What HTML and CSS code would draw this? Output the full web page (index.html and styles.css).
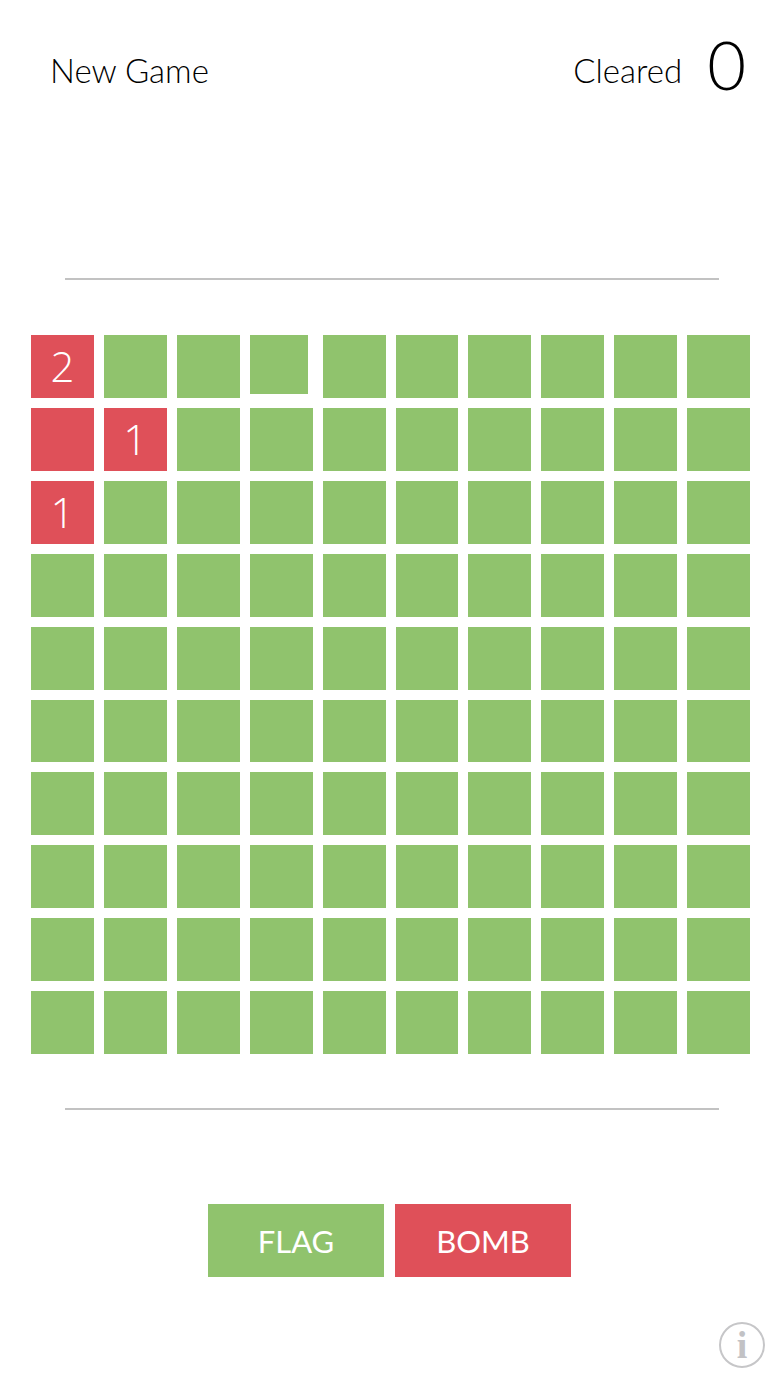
FILE: index.html
```html
<!DOCTYPE html>
<html lang="en">
<head>
<meta charset="utf-8">
<meta name="viewport" content="width=device-width, initial-scale=1">
<title>Minesweeper</title>
<link rel="stylesheet" href="styles.css">
</head>
<body>
<div class="game">
  <header class="top">
    <button class="new-game" type="button">New Game</button>
    <div class="score"><span class="score-label">Cleared</span><output class="score-value">0</output></div>
  </header>
  <hr class="rule">
  <main class="board" id="board"></main>
  <hr class="rule">
  <div class="modes">
    <button class="mode flag" type="button">FLAG</button>
    <button class="mode bomb" type="button">BOMB</button>
  </div>
  <footer class="bottom">
    <button class="info" type="button" aria-label="Information">i</button>
  </footer>
</div>
<script src="board.js"></script>
</body>
</html>
```
FILE: styles.css
```css
* {
  box-sizing: border-box;
}

body {
  margin: 0;
  background: #fff;
  color: #000;
  font-family: Lato, "Open Sans", sans-serif;
  font-weight: 300;
}

button {
  margin: 0;
  padding: 0;
  border: 0;
  border-radius: 0;
  background: none;
  color: inherit;
  font: inherit;
  cursor: pointer;
}

.game {
  display: flex;
  flex-direction: column;
}

.top {
  display: flex;
  justify-content: space-between;
  align-items: flex-start;
  height: 278px;
  padding: 24px 35px 0 50px;
}

.new-game,
.score-label {
  font-size: 33px;
  line-height: 92px;
}

.score {
  display: flex;
  align-items: flex-start;
  gap: 25px;
}

.score-value {
  font-size: 67px;
  line-height: 80px;
}

.rule {
  height: 2px;
  margin: 0 62px 0 65px;
  border: 0;
  background: #c2c2c2;
}

.board {
  display: grid;
  grid-template-columns: repeat(10, 1fr);
  gap: 10px;
  padding: 55px 31px 54px;
}

.cell {
  display: flex;
  justify-content: center;
  align-items: center;
  width: 100%;
  aspect-ratio: 1;
  background: #90c36d;
  color: #fff;
  font-family: "Open Sans", sans-serif;
  font-size: 42px;
  line-height: 42px;
}

.cell.open {
  background: #df5059;
}

.cell.pressed {
  width: 93%;
  align-self: start;
}

.modes {
  display: flex;
  justify-content: center;
  gap: 11px;
  padding: 94px 2px 0 0;
}

.mode {
  width: 176px;
  height: 73px;
  color: #fff;
  font-size: 31px;
  font-weight: 400;
}

.flag {
  background: #90c36d;
}

.bomb {
  background: #df5059;
}

.bottom {
  display: flex;
  justify-content: flex-end;
  padding: 45px 16px 20px;
}

.info {
  width: 46px;
  height: 46px;
  border: 2px solid #c6c6c8;
  border-radius: 50%;
  color: #c2c2c5;
  font: bold 38px/40px "Liberation Serif", serif;
}
```
FILE: board.js
```js
const size = 10;
const opened = { "0,0": "2", "1,0": "", "1,1": "1", "2,0": "1" };
const pressed = "0,3";
const board = document.getElementById("board");

for (let row = 0; row < size; row++) {
  for (let col = 0; col < size; col++) {
    const key = `${row},${col}`;
    const cell = document.createElement("button");
    cell.type = "button";
    cell.className = "cell";
    cell.setAttribute("aria-label", `Row ${row + 1}, column ${col + 1}`);
    if (key in opened) {
      cell.classList.add("open");
      cell.textContent = opened[key];
    }
    if (key === pressed) cell.classList.add("pressed");
    board.append(cell);
  }
}
```
